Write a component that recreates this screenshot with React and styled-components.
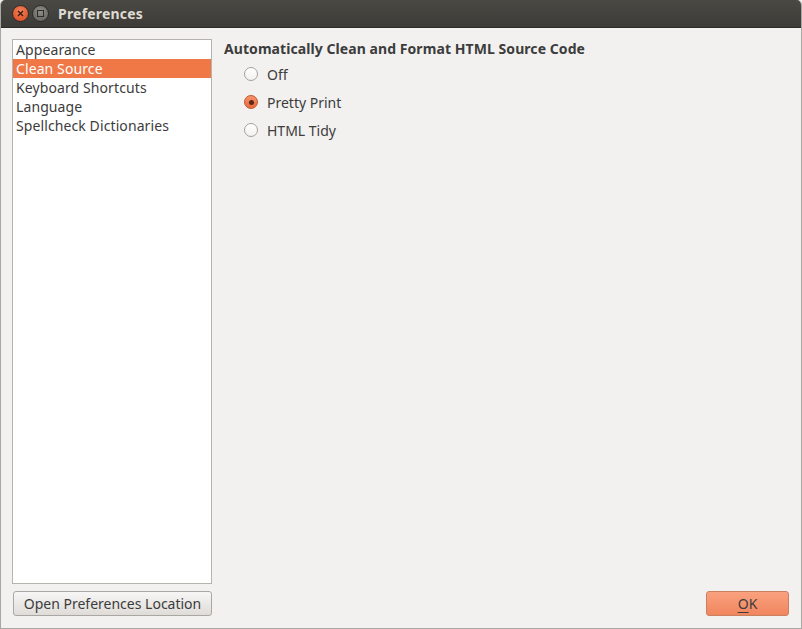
import styled, { createGlobalStyle } from 'styled-components';

const GlobalStyle = createGlobalStyle`
    html, body {
        margin: 0;
        padding: 0;
        background: #f2f1f0;
    }
    body {
        font-family: "Noto Sans", "DejaVu Sans", sans-serif;
        font-size: 14px;
        color: #3c3c3c;
    }
`;

const Window = styled.div`
    width: 802px;
    height: 629px;
    box-sizing: border-box;
    display: flex;
    flex-direction: column;
    background: #f2f1f0;
    border: 1px solid #a9a7a3;
    border-top: none;
    border-radius: 5px 5px 0 0;
    overflow: hidden;
`;

const TitleBar = styled.div`
    height: 27px;
    flex: none;
    display: flex;
    align-items: center;
    padding-left: 11px;
    gap: 3px;
    background: linear-gradient(#4a4944, #3c3b37);
    border-bottom: 1px solid #2d2c29;
`;

const WinButton = styled.div`
    width: 15px;
    height: 15px;
    border-radius: 50%;
    display: flex;
    align-items: center;
    justify-content: center;
    background: ${(p) => (p.$close ? 'radial-gradient(circle at 50% 35%, #f3825a, #d8471c)' : 'radial-gradient(circle at 50% 35%, #8f8d88, #5f5e59)')};
    border: 1px solid #2e2d2a;
`;

const Title = styled.div`
    margin-left: 6px;
    font-weight: 700;
    font-size: 14px;
    letter-spacing: 0.2px;
    color: #dfdbd2;
`;

const Body = styled.div`
    flex: 1;
    display: grid;
    grid-template-columns: 200px 1fr;
    grid-template-rows: 1fr auto;
    column-gap: 12px;
    row-gap: 7px;
    padding: 11px 12px 12px 11px;
`;

const List = styled.ul`
    margin: 0;
    padding: 0;
    list-style: none;
    background: #ffffff;
    border: 1px solid #b6b3ae;
`;

const ListItem = styled.li`
    height: 19px;
    line-height: 19px;
    padding-left: 3px;
    font-size: 14px;
    letter-spacing: 0.1px;
    color: ${(p) => (p.$selected ? '#ffffff' : '#3c3c3c')};
    background: ${(p) => (p.$selected ? '#f07746' : 'transparent')};
`;

const Content = styled.div`
    padding-left: 0;
`;

const Heading = styled.div`
    font-weight: 700;
    font-size: 14px;
    line-height: 20px;
    letter-spacing: 0.07px;
    color: #3c3c3c;
    margin-top: 0;
    margin-bottom: 1px;
`;

const RadioRow = styled.label`
    display: flex;
    align-items: center;
    height: 28px;
    padding-left: 20px;
    gap: 9px;
    font-size: 14px;
    color: #3c3c3c;
`;

const RadioDot = styled.span`
    width: 14px;
    height: 14px;
    border-radius: 50%;
    box-sizing: border-box;
    display: flex;
    align-items: center;
    justify-content: center;
    border: 1px solid ${(p) => (p.$checked ? '#c2552c' : '#a3a19d')};
    background: ${(p) => (p.$checked ? 'linear-gradient(#f7926a, #e9683b)' : 'linear-gradient(#ffffff, #f2f1f0)')};
    &::after {
        content: '';
        display: ${(p) => (p.$checked ? 'block' : 'none')};
        width: 5px;
        height: 5px;
        border-radius: 50%;
        background: #5a2a18;
    }
`;

const Button = styled.button`
    height: 25px;
    box-sizing: border-box;
    font-family: inherit;
    font-size: 14px;
    color: #3c3c3c;
    border-radius: 3px;
    border: 1px solid ${(p) => (p.$primary ? '#c9805f' : '#a9a7a3')};
    background: ${(p) => (p.$primary ? 'linear-gradient(#faa17f, #f0865e)' : 'linear-gradient(#f7f6f5, #dfdcd8)')};
    padding: 0;
    width: ${(p) => (p.$primary ? '83px' : '199px')};
    u {
        text-underline-offset: 3px;
    }
`;

const Footer = styled.div`
    grid-column: 1 / span 2;
    display: flex;
    justify-content: space-between;
    padding-left: 1px;
`;

const sections = ['Appearance', 'Clean Source', 'Keyboard Shortcuts', 'Language', 'Spellcheck Dictionaries'];
const options = [
    { id: 'off', label: 'Off' },
    { id: 'pretty', label: 'Pretty Print', checked: true },
    { id: 'tidy', label: 'HTML Tidy' },
];

export default function App() {
    return (
        <>
            <GlobalStyle />
            <Window>
                <TitleBar>
                    <WinButton $close>
                        <svg width="7" height="7" viewBox="0 0 7 7">
                            <path d="M1 1 L6 6 M6 1 L1 6" stroke="#3a1a0e" strokeWidth="1.4" />
                        </svg>
                    </WinButton>
                    <WinButton>
                        <svg width="7" height="7" viewBox="0 0 7 7">
                            <rect x="0.5" y="0.5" width="6" height="6" fill="none" stroke="#2e2d2a" strokeWidth="1" />
                        </svg>
                    </WinButton>
                    <Title>Preferences</Title>
                </TitleBar>
                <Body>
                    <List>
                        {sections.map((item) => (
                            <ListItem key={item} $selected={item === 'Clean Source'}>
                                {item}
                            </ListItem>
                        ))}
                    </List>
                    <Content>
                        <Heading>Automatically Clean and Format HTML Source Code</Heading>
                        {options.map((opt) => (
                            <RadioRow key={opt.id}>
                                <RadioDot $checked={opt.checked} />
                                {opt.label}
                            </RadioRow>
                        ))}
                    </Content>
                    <Footer>
                        <Button>Open Preferences Location</Button>
                        <Button $primary>
                            <u>O</u>K
                        </Button>
                    </Footer>
                </Body>
            </Window>
        </>
    );
}
